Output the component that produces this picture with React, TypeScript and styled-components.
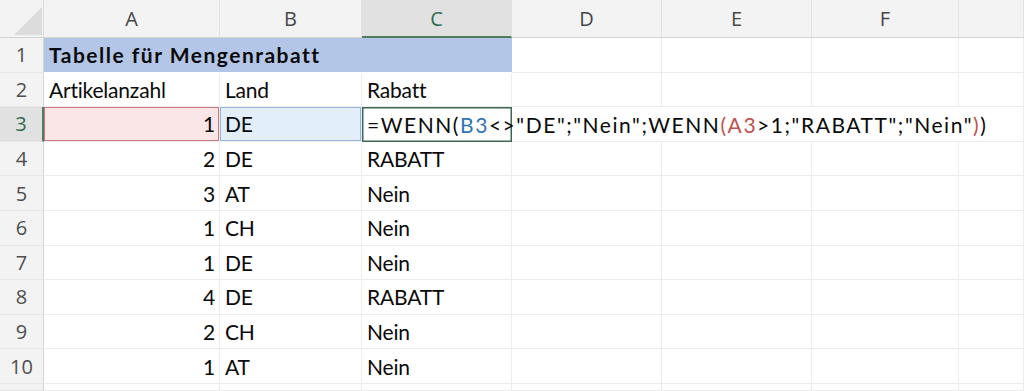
import styled, { createGlobalStyle, css } from "styled-components";

const GlobalStyle = createGlobalStyle`
  html, body {
    margin: 0;
    padding: 0;
    background: #ffffff;
  }
  body {
    font-family: Lato, "Liberation Sans", sans-serif;
    overflow: hidden;
  }
`;

const columns = ["A", "B", "C", "D", "E", "F", ""];

const rows: [string, string, string][] = [
  ["2", "DE", "RABATT"],
  ["3", "AT", "Nein"],
  ["1", "CH", "Nein"],
  ["1", "DE", "Nein"],
  ["4", "DE", "RABATT"],
  ["2", "CH", "Nein"],
  ["1", "AT", "Nein"],
];

const App = () => {
  return (
    <>
      <GlobalStyle />
      <Sheet>
        <Corner>
          <CornerMark />
        </Corner>
        {columns.map((c) => (
          <ColHeader key={c || "g"} $active={c === "C"}>
            {c}
          </ColHeader>
        ))}

        <RowHeader>1</RowHeader>
        <Cell $fill="#b4c6e7" $bold $span={3} $noLine>
          Tabelle für Mengenrabatt
        </Cell>
        <Cell />
        <Cell />
        <Cell />
        <Cell />

        <RowHeader>2</RowHeader>
        <Cell>Artikelanzahl</Cell>
        <Cell>Land</Cell>
        <Cell>Rabatt</Cell>
        <Cell />
        <Cell />
        <Cell />
        <Cell />

        <RowHeader $active>3</RowHeader>
        <Cell $right $fill="#fbe6e7" $frame="#c9787a">
          1
        </Cell>
        <Cell $fill="#e2eef9" $frame="#93b7dc">
          DE
        </Cell>
        <ActiveCell>
          =WENN(<Ref $c="#2f74b5">B3</Ref>&lt;&gt;"DE";"Nein";WENN
          <Ref $c="#c0504d">(A3</Ref>&gt;1;"RABATT";"Nein"
          <Ref $c="#c0504d">)</Ref>)
        </ActiveCell>
        <Cell $noLine />
        <Cell $noLine />
        <Cell $noLine />
        <Cell />

        {rows.map(([n, land, rabatt], i) => (
          <Row key={i} index={i + 4} n={n} land={land} rabatt={rabatt} />
        ))}

        <RowHeader />
        <Cell />
        <Cell />
        <Cell />
        <Cell />
        <Cell />
        <Cell />
        <Cell />
      </Sheet>
    </>
  );
};

const Row = ({ index, n, land, rabatt }: { index: number; n: string; land: string; rabatt: string }) => (
  <>
    <RowHeader>{index}</RowHeader>
    <Cell $right>{n}</Cell>
    <Cell>{land}</Cell>
    <Cell>{rabatt}</Cell>
    <Cell />
    <Cell />
    <Cell />
    <Cell />
  </>
);

export default App;

const Sheet = styled.div`
  display: grid;
  grid-template-columns: 44px 176px 142px 150px 150px 150px 147px 65px;
  grid-template-rows: 38px repeat(10, 34.6px) 1fr;
  width: 1024px;
  height: 391px;
  background: #ffffff;
`;

const Corner = styled.div`
  position: relative;
  background: #f3f3f3;
  border-right: 1px solid #dcdcdc;
  border-bottom: 1px solid #d4d4d4;
`;

const CornerMark = styled.div`
  position: absolute;
  right: 1px;
  bottom: 2px;
  width: 0;
  height: 0;
  border-left: 28px solid transparent;
  border-bottom: 28px solid #dcdcdc;
`;

const ColHeader = styled.div<{ $active?: boolean }>`
  display: flex;
  align-items: center;
  justify-content: center;
  background: #f3f3f3;
  border-right: 1px solid #e2e2e2;
  border-bottom: 1px solid #d4d4d4;
  color: #474747;
  font-family: "Open Sans", sans-serif;
  font-size: 20px;
  font-weight: 400;
  ${(p) =>
    p.$active &&
    css`
      background: #e1e1e1;
      color: #2f6b4f;
      border-bottom: 2px solid #4f7c63;
    `}
`;

const RowHeader = styled.div<{ $active?: boolean }>`
  display: flex;
  align-items: center;
  justify-content: center;
  background: #f3f3f3;
  border-right: 1px solid #d4d4d4;
  border-bottom: 1px solid #e6e6e6;
  color: #4f4f4f;
  font-family: "Open Sans", sans-serif;
  font-size: 20px;
  font-weight: 400;
  ${(p) =>
    p.$active &&
    css`
      background: #e1e1e1;
      color: #2f6b4f;
      border-right: 2px solid #4f7c63;
    `}
`;

const Cell = styled.div<{
  $right?: boolean;
  $fill?: string;
  $bold?: boolean;
  $span?: number;
  $noLine?: boolean;
  $frame?: string;
}>`
  display: flex;
  align-items: center;
  justify-content: ${(p) => (p.$right ? "flex-end" : "flex-start")};
  padding: 0 4px 0 5px;
  background: ${(p) => p.$fill || "#ffffff"};
  border-right: 1px solid ${(p) => (p.$noLine ? "transparent" : "#ececec")};
  border-bottom: 1px solid #ececec;
  font-size: 21px;
  font-weight: ${(p) => (p.$bold ? 700 : 400)};
  letter-spacing: ${(p) => (p.$bold ? "1.5px" : "-0.2px")};
  color: #0a0a0a;
  white-space: nowrap;
  overflow: visible;
  ${(p) => p.$span && css`grid-column: span ${p.$span};`}
  ${(p) => p.$noLine && p.$fill && css`border-right: none; border-bottom-color: #ffffff;`}
  ${(p) =>
    p.$frame &&
    css`
      box-shadow: inset 0 0 0 1px ${p.$frame};
    `}
`;

const ActiveCell = styled.div`
  position: relative;
  z-index: 1;
  display: flex;
  align-items: center;
  padding: 0 4px 0 5px;
  background: #ffffff;
  box-shadow: inset 0 0 0 1.5px #3f6652;
  font-size: 21px;
  letter-spacing: 1.55px;
  color: #0a0a0a;
  white-space: nowrap;
  overflow: visible;
`;

const Ref = styled.span<{ $c: string }>`
  color: ${(p) => p.$c};
`;
